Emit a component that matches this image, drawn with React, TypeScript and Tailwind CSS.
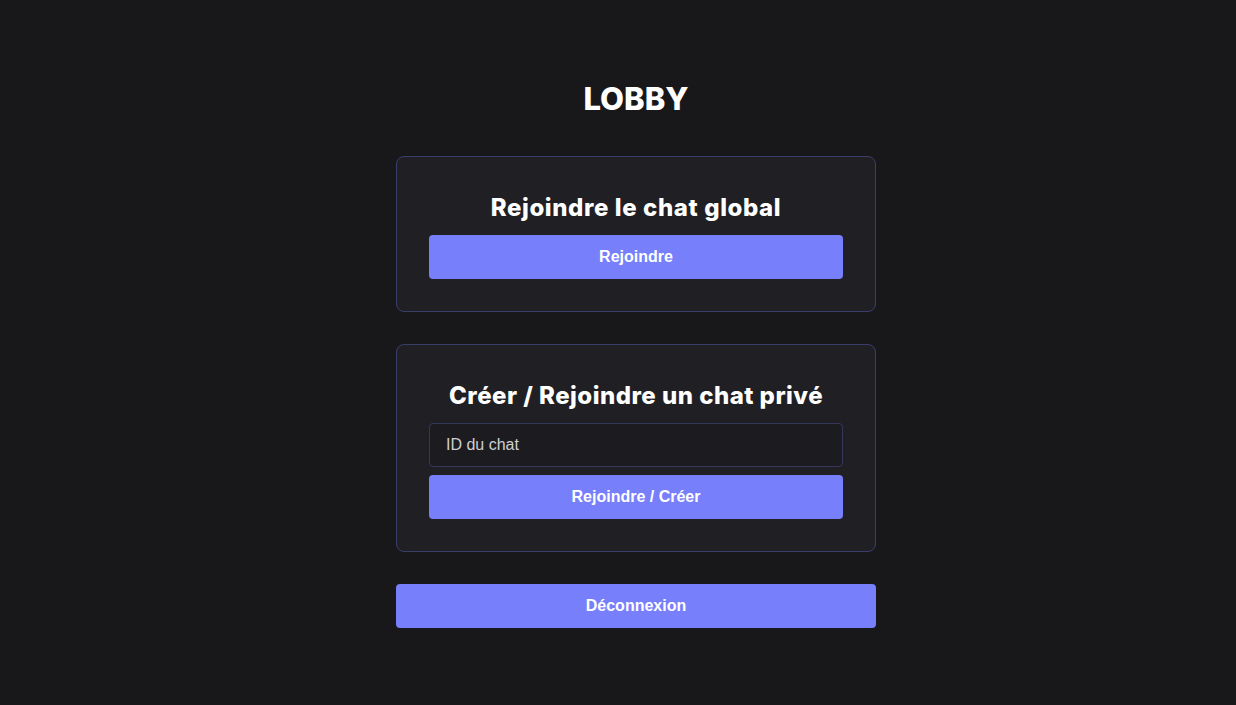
export default function App() {
    return (
        <div className="min-h-screen bg-[#18181b] flex flex-col items-center justify-center gap-8 pl-9 text-white font-['Liberation_Sans',Arial,sans-serif]">
            <h1 className="text-[31px] leading-[46px] font-extrabold font-['Inter',sans-serif] -mt-0.5 mb-0.5">LOBBY</h1>

            <div className="w-[480px] bg-[#202024] border border-[#3b3d6b] rounded-lg px-8 pt-8 pb-8 flex flex-col">
                <h2 className="text-2xl leading-9 font-extrabold font-['Inter',sans-serif] tracking-[0.025em] text-center pt-px mb-[9px]">Rejoindre le chat global</h2>
                <button className="h-11 w-full bg-[#777ffa] rounded text-white font-bold text-base">Rejoindre</button>
            </div>

            <div className="w-[480px] bg-[#202024] border border-[#3b3d6b] rounded-lg px-8 pt-8 pb-8 flex flex-col">
                <h2 className="text-2xl leading-9 font-extrabold font-['Inter',sans-serif] tracking-[0.02em] text-center pt-px mb-[9px]">Créer / Rejoindre un chat privé</h2>
                <input
                    className="h-11 w-full bg-[#1c1c20] border border-[#35365c] rounded px-4 text-base text-[#d4d4d8] placeholder:text-[#cfcfd4] outline-none"
                    placeholder="ID du chat"
                />
                <button className="mt-2 h-11 w-full bg-[#777ffa] rounded text-white font-bold text-base">Rejoindre / Créer</button>
            </div>

            <button className="w-[480px] h-11 bg-[#777ffa] rounded text-white font-bold text-base">Déconnexion</button>
        </div>
    )
}
